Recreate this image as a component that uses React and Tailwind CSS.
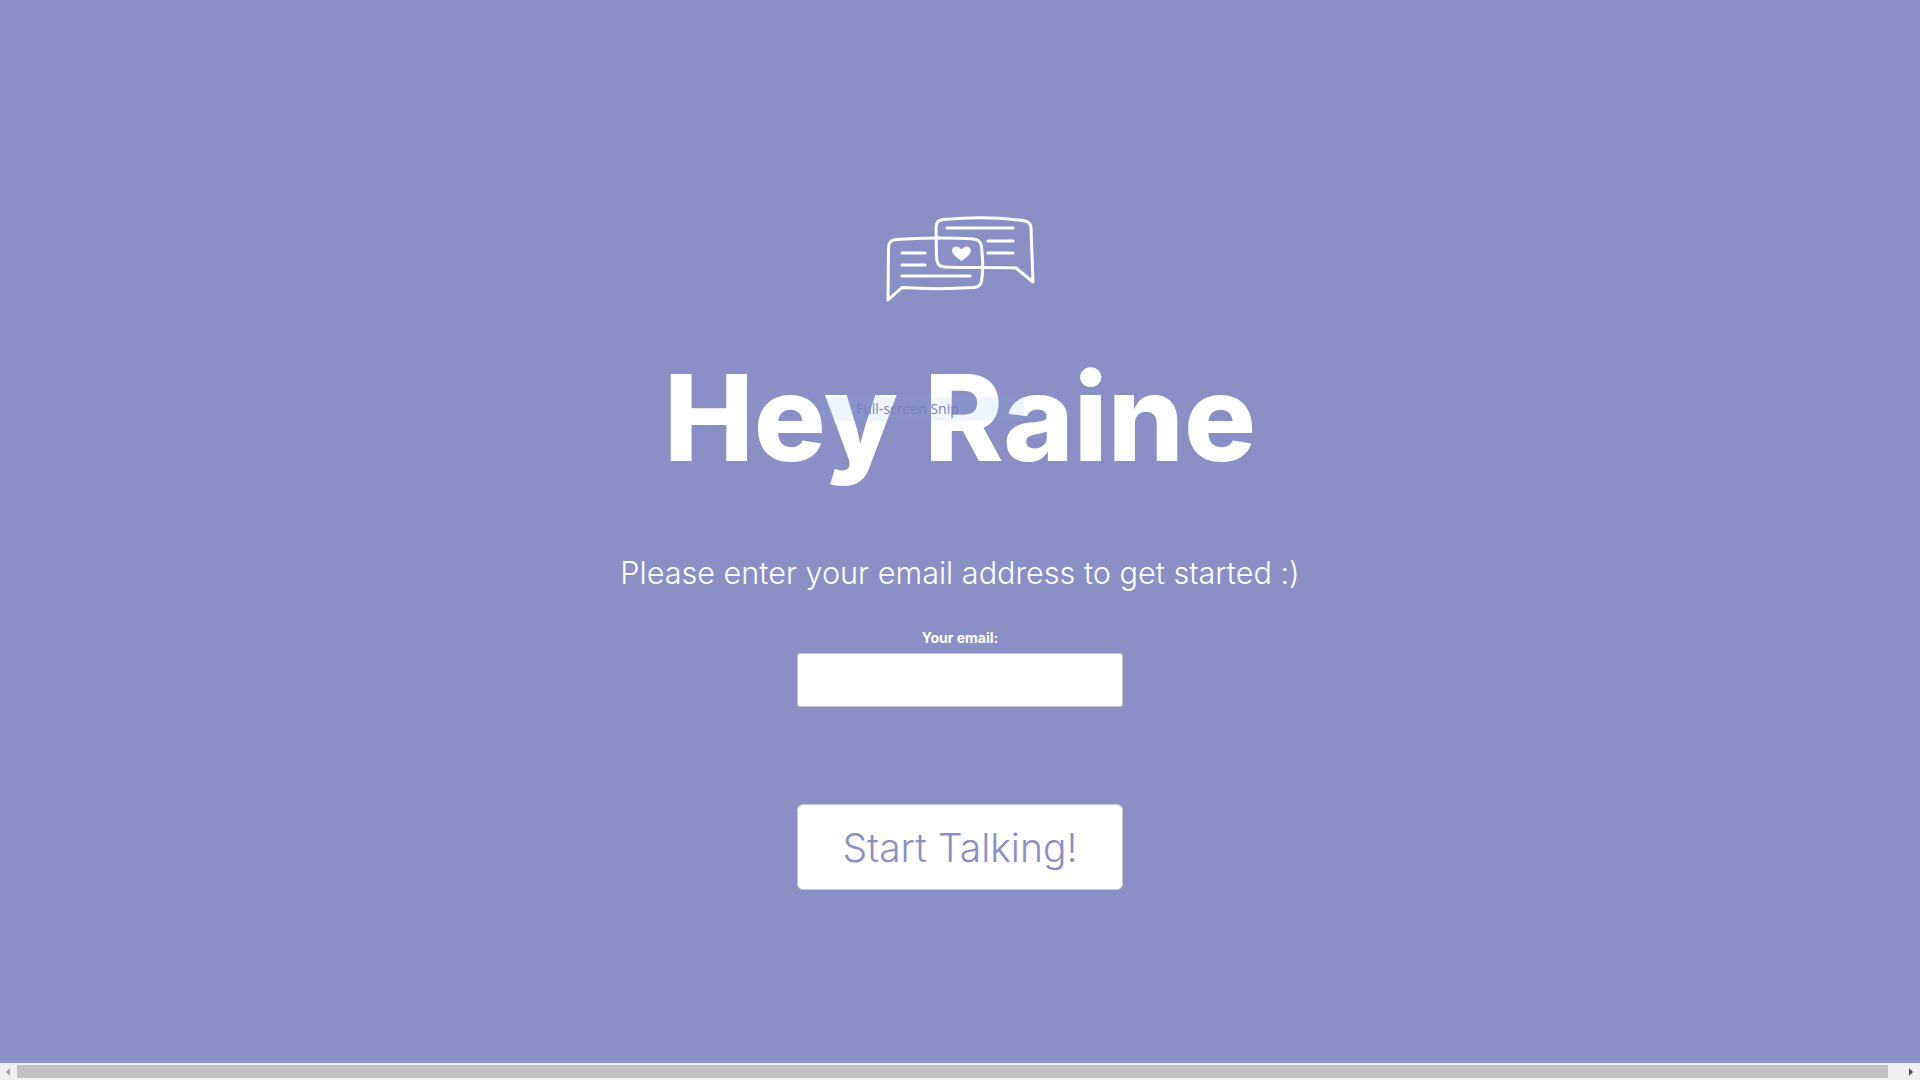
import { useState } from 'react';

function ChatIcon() {
  return (
    <svg width="150" height="88" viewBox="0 0 150 88" fill="none" stroke="#fff" strokeWidth="3" strokeLinecap="round" strokeLinejoin="round">
      <path d="M3 85L3.500 33C3.500 27 6 25 11 24.500C35 22.500 70 22.500 88 24C94 24.500 96 27 96.500 32C98 45 98 58 96.500 66C96 70 94 72 89 72.500C65 74 40 74 17 72.500Z" />
      <path d="M51.500 42L51 12C51 7 54 5 58 4.500C85 2 115 2 140 6C144 7 146 9 146 13L148 67L131 53C110 52 80 53 60 52C53 51.500 52 48 51.500 42Z" />
      <path d="M62 13H128" />
      <path d="M103 26H128M103 38H128" />
      <path d="M17 38H40M17 50H40M17 61H85" />
      <path d="M68.500 33C71 31 74 32 76.500 35C79 32 82 31 84.500 33C86 35 85.500 38 83 40.500L76.500 45.500L70 40.500C67.500 38 67 35 68.500 33Z" fill="#fff" strokeWidth="1" />
    </svg>
  );
}

export default function App() {
  const [email, setEmail] = useState('');

  return (
    <div className="relative flex h-screen w-full flex-col overflow-hidden bg-[#8a90c6] font-['Inter',sans-serif] text-white">
      <main className="flex min-h-0 flex-1 flex-col items-center pt-[215px]">
        <ChatIcon />
        <h1 className="mt-[40px] text-[120px] leading-[150px] font-extrabold">Hey Raine</h1>
        <p className="mt-[60px] text-[30.6px] leading-[40px] font-light">Please enter your email address to get started :)</p>
        <label htmlFor="email" className="mt-[36px] text-[14px] leading-[18px] font-bold">Your email:</label>
        <input
          id="email"
          value={email}
          onChange={(e) => setEmail(e.target.value)}
          className="mt-[6px] h-[54px] w-[326px] rounded-[3px] border border-[#c8c8d0] bg-white"
        />
        <button className="mt-[97px] h-[86px] w-[326px] rounded-[6px] border border-[#c8c8d0] bg-white pt-[2px] text-[39px] font-light text-[#8a90c6]">
          Start Talking!
        </button>
      </main>

      {/* scrollbar */}
      <div className="flex h-[17px] items-center bg-[#f0f0f0]">
        <div className="flex w-[17px] justify-start pl-[6px]">
          <span className="h-0 w-0 border-y-4 border-r-4 border-y-transparent border-r-[#a3a3a3]" />
        </div>
        <div className="h-[13px] flex-1 bg-[#c1c1c1]" />
        <div className="flex w-[32px] justify-end pr-[7px]">
          <span className="h-0 w-0 border-y-4 border-l-4 border-y-transparent border-l-[#505050]" />
        </div>
      </div>

      {/* snipping tool hint */}
      <div className="absolute top-[397px] left-[822px] h-[24px] w-[202px] bg-[#7fb0e8]/12 pl-[34px] font-['Open_Sans',sans-serif] text-[14px] leading-[24px] text-[#7c80b4]">
        Full-screen Snip
      </div>
    </div>
  );
}
